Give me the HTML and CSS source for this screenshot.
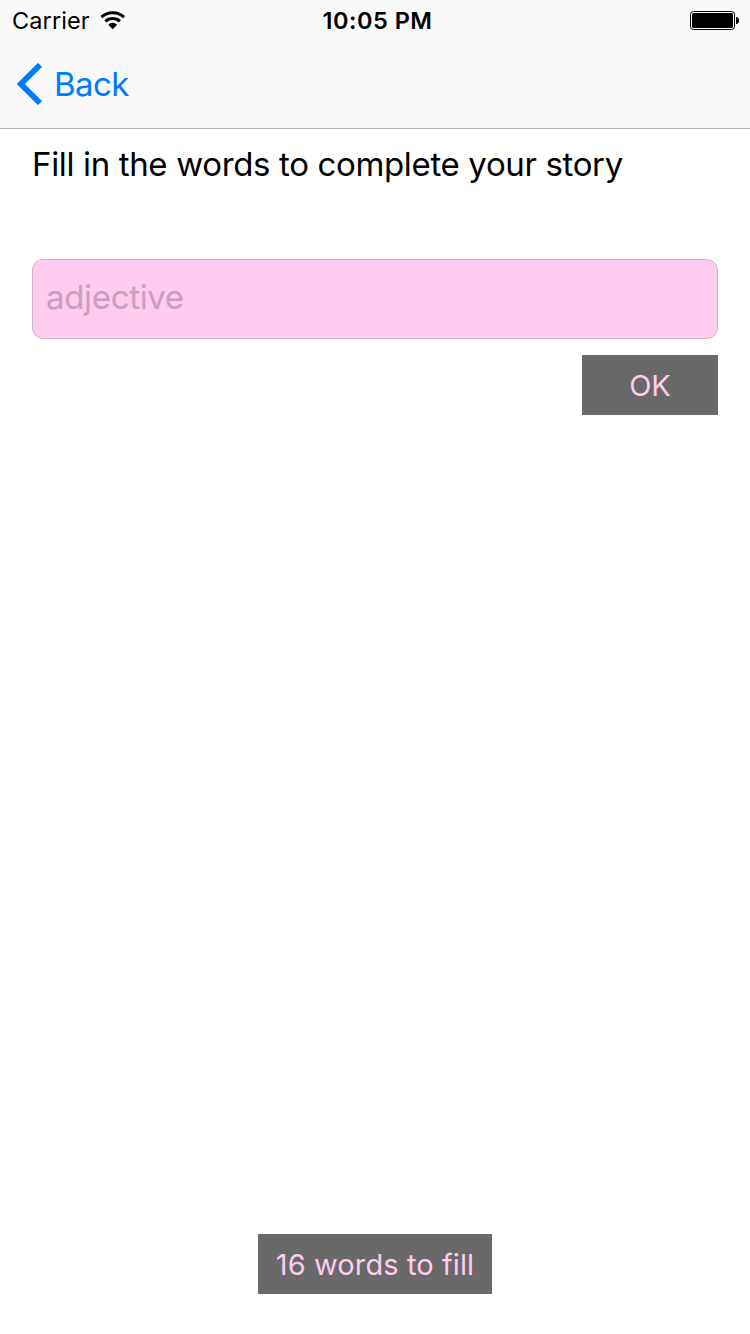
FILE: index.html
```html
<!DOCTYPE html>
<html lang="en">
<head>
<meta charset="utf-8">
<title>Story words</title>
<link rel="stylesheet" href="styles.css">
</head>
<body>
<div class="screen">
  <header class="top">
    <div class="status">
      <div class="status-left">
        <span class="carrier">Carrier</span>
        <svg class="wifi" width="26" height="20" viewBox="0 0 26 20" fill="none" stroke="#000" stroke-width="3.1">
          <path d="M1.4 7.2A16.5 16.5 0 0 1 24 7.2"/>
          <path d="M5.5 11.4A10.4 10.4 0 0 1 19.9 11.4"/>
          <path d="M8.3 14.7A6.2 6.2 0 0 1 17.1 14.7L12.7 19.2Z" fill="#000" stroke="none"/>
        </svg>
      </div>
      <span class="time">10:05 PM</span>
      <svg class="battery" width="50" height="20" viewBox="0 0 50 20">
        <rect x="0.5" y="0.5" width="44" height="18" rx="3" fill="#fff" stroke="#000"/>
        <rect x="2" y="2" width="41" height="15" rx="1.5"/>
        <path d="M46 6H47Q49 6.6 49 9.5T47 13H46Z"/>
      </svg>
    </div>
    <nav class="nav">
      <svg class="chevron" width="26" height="42" viewBox="0 0 26 42" fill="none" stroke="#007aff" stroke-width="5.8">
        <path d="M24 2L4.8 21L24 40"/>
      </svg>
      <span class="back">Back</span>
    </nav>
  </header>
  <main class="content">
    <h1 class="prompt">Fill in the words to complete your story</h1>
    <input class="field" type="text" placeholder="adjective">
    <button class="button ok"><span class="ok-label">OK</span></button>
    <div class="button counter"><span class="counter-label">16 words to fill</span></div>
  </main>
</div>
</body>
</html>
```
FILE: styles.css
```css
* { box-sizing: border-box; }
body {
  margin: 0;
  background: #fff;
  font-family: Inter, "Liberation Sans", sans-serif;
  color: #000;
}
.screen {
  display: flex;
  flex-direction: column;
  height: 1334px;
}
.top {
  height: 129px;
  background: #f9f9f9;
  border-bottom: 1px solid #b2b2b2;
}
.status {
  display: grid;
  grid-template-columns: 1fr auto 1fr;
  align-items: center;
  height: 40px;
  padding: 1px 10px 0 12px;
  font-size: 23.5px;
  line-height: 28px;
}
.status-left {
  display: flex;
  align-items: center;
  gap: 10px;
}
.carrier { letter-spacing: 0.1px; }
.wifi { margin-top: -2px; }
.time { font-weight: 600; margin-left: 3px; letter-spacing: 0.5px; }
.battery { justify-self: end; }
.nav {
  display: flex;
  align-items: center;
  gap: 12px;
  height: 88px;
  padding-left: 16px;
  color: #007aff;
  font-size: 33px;
}
.back { letter-spacing: -0.6px; }
.content {
  flex: 1;
  display: flex;
  flex-direction: column;
  padding: 15px 32px 40px;
}
.prompt {
  margin: 0 0 75px;
  font-size: 33px;
  font-weight: 400;
  line-height: 40px;
  letter-spacing: -0.35px;
  white-space: nowrap;
}
.field {
  width: 100%;
  height: 80px;
  padding: 0 13px 4px;
  border: 1px solid #d0b5c8;
  border-radius: 11px;
  background: #ffccef;
  font: 33px Inter, "Liberation Sans", sans-serif;
  letter-spacing: -0.33px;
}
.field::placeholder {
  color: #c8a0c0;
  opacity: 1;
}
.button {
  display: flex;
  align-items: center;
  justify-content: center;
  height: 60px;
  padding: 1px 0 0;
  border: 0;
  background: #696969;
  color: #ffccef;
  font: 29px Inter, "Liberation Sans", sans-serif;
  white-space: nowrap;
}
.ok {
  align-self: flex-end;
  width: 136px;
  margin-top: 16px;
}
.counter {
  align-self: center;
  width: 234px;
  margin-top: auto;
  letter-spacing: 0.1px;
}
```
